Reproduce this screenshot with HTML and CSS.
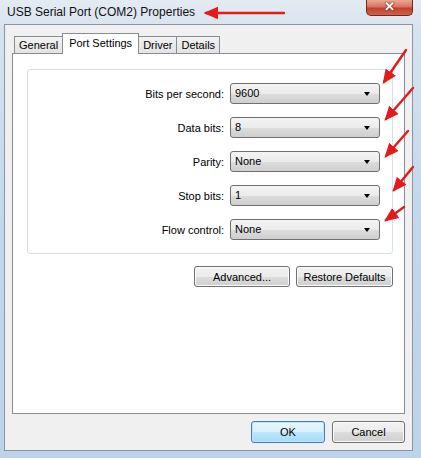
FILE: index.html
```html
<!DOCTYPE html>
<html lang="en">
<head>
  <meta charset="UTF-8" />
  <title>USB Serial Port (COM2) Properties</title>
  <link rel="stylesheet" href="styles.css">
</head>
<body>
  <div class="window">
    <div class="titlebar">
      <span class="title">USB Serial Port (COM2) Properties</span>
      <div class="close">&#x2715;</div>
    </div>

    <div class="dialog">
      <div class="tabs">
        <div class="tab">General</div>
        <div class="tab active">Port Settings</div>
        <div class="tab">Driver</div>
        <div class="tab">Details</div>
      </div>

      <div class="panel">
        <div class="group">
          <label>Bits per second:</label>
          <div class="combo">9600</div>
          <label>Data bits:</label>
          <div class="combo">8</div>
          <label>Parity:</label>
          <div class="combo">None</div>
          <label>Stop bits:</label>
          <div class="combo">1</div>
          <label>Flow control:</label>
          <div class="combo">None</div>
        </div>
        <div class="panel-buttons">
          <button class="btn btn-adv">Advanced...</button>
          <button class="btn btn-restore">Restore Defaults</button>
        </div>
      </div>

      <div class="footer">
        <button class="btn btn-ok">OK</button>
        <button class="btn btn-cancel">Cancel</button>
      </div>
    </div>

    <!-- red annotation arrows -->
    <svg class="marks" width="421" height="458" viewBox="0 0 421 458">
      <defs>
        <marker id="head" markerWidth="6" markerHeight="6" refX="5" refY="3" orient="auto" markerUnits="strokeWidth">
          <path d="M0,0.4 L6,3 L0,5.6 z" fill="#e31b1b" />
        </marker>
      </defs>
      <g stroke="#e31b1b" stroke-width="2.4" stroke-linecap="round" marker-end="url(#head)">
        <line x1="284" y1="13" x2="206" y2="13" />
        <line x1="406" y1="50" x2="384" y2="82" />
        <line x1="413" y1="88" x2="386" y2="119" />
        <line x1="408" y1="131" x2="386" y2="156" />
        <line x1="413" y1="167" x2="394" y2="190" />
        <line x1="404" y1="207" x2="386" y2="220" />
      </g>
    </svg>
  </div>
</body>
</html>
```

FILE: styles.css
```css
* { box-sizing: border-box; }
body {
  margin: 0;
  font-family: 'Liberation Sans', Arial, sans-serif;
  font-size: 11px;
  color: #000;
  background: #c6d9ec;
}
.window {
  position: relative;
  width: 421px;
  height: 458px;
  display: flex;
  flex-direction: column;
  overflow: hidden;
  background: linear-gradient(to bottom, #e4ebf2 0, #d6e3ef 30px, #c4d8ec 200px, #bcd3ea 100%);
}
.titlebar {
  height: 24px;
  display: flex;
  align-items: flex-start;
  padding-left: 7px;
}
.title {
  margin-top: 5px;
  font-size: 12px;
  color: #111;
}
.close {
  margin-left: auto;
  margin-right: 8px;
  width: 47px;
  height: 16px;
  border: 1px solid #6b2a22;
  border-top: none;
  border-radius: 0 0 5px 5px;
  background: linear-gradient(to bottom, #e9a99b 0, #d8725f 45%, #c2412c 55%, #d1604a 100%);
  color: #fff;
  font-size: 13px;
  font-weight: bold;
  text-align: center;
  line-height: 14px;
  text-shadow: 0 0 2px #5a1a12, 0 0 1px #5a1a12;
}
.dialog {
  flex: 1;
  margin: 0 8px 7px 4px;
  border: 1px solid #8895a5;
  background: #f0f0f0;
  padding: 8px 7px 0;
  display: flex;
  flex-direction: column;
}

/* tabs */
.tabs {
  display: flex;
  align-items: flex-end;
  height: 20px;
  padding-left: 2px;
}
.tab {
  height: 17px;
  padding: 0 4px;
  line-height: 16px;
  border: 1px solid #898c95;
  border-bottom: none;
  border-right: none;
  background: linear-gradient(to bottom, #f2f2f2, #e3e3e3);
  color: #000;
}
.tab:last-child { border-right: 1px solid #898c95; }
.tab.active {
  height: 21px;
  margin-bottom: -1px;
  padding: 0 6px;
  line-height: 18px;
  border-right: 1px solid #898c95;
  background: #fff;
  position: relative;
  z-index: 1;
}
.tab.active + .tab { border-left: none; }
.panel {
  height: 361px;
  background: #fff;
  border: 1px solid #898c95;
  padding: 15px 11px 0 14px;
}

/* group of settings */
.group {
  border: 1px solid #d5dfe5;
  border-radius: 3px;
  padding: 13px 12px 13px 0;
  display: grid;
  grid-template-columns: 1fr 150px;
  column-gap: 6px;
  row-gap: 13px;
  align-items: center;
}
.group label {
  text-align: right;
}
.combo {
  position: relative;
  height: 21px;
  line-height: 19px;
  padding-left: 4px;
  border: 1px solid #707070;
  border-radius: 3px;
  background: linear-gradient(to bottom, #f4f4f4 0, #ebebeb 50%, #dddddd 51%, #cfcfcf 100%);
}
.combo::after {
  content: "";
  position: absolute;
  right: 9px;
  top: 8px;
  border-left: 3.5px solid transparent;
  border-right: 3.5px solid transparent;
  border-top: 4px solid #000;
}

/* buttons */
.btn {
  font-family: inherit;
  font-size: 11px;
  color: #000;
  height: 21px;
  padding: 0;
  border: 1px solid #707070;
  border-radius: 3px;
  background: linear-gradient(to bottom, #f2f2f2 0, #ebebeb 50%, #dddddd 51%, #cfcfcf 100%);
  box-shadow: inset 0 0 0 1px #fcfcfc;
}
.panel-buttons {
  display: flex;
  justify-content: flex-end;
  gap: 6px;
  margin-top: 12px;
}
.btn-adv { width: 96px; }
.btn-restore { width: 97px; }
.footer {
  display: flex;
  justify-content: flex-end;
  gap: 7px;
  margin-top: 7px;
}
.btn-ok, .btn-cancel { height: 22px; }
.btn-ok {
  width: 74px;
  border-color: #3c7fb1;
  background: linear-gradient(to bottom, #eaf6fd 0, #d9f0fc 50%, #bee6fd 51%, #a7d9f5 100%);
  box-shadow: inset 0 0 0 1px #bfe6fb;
}
.btn-cancel { width: 73px; }

.marks {
  position: absolute;
  top: 0;
  left: 0;
  pointer-events: none;
}
```
